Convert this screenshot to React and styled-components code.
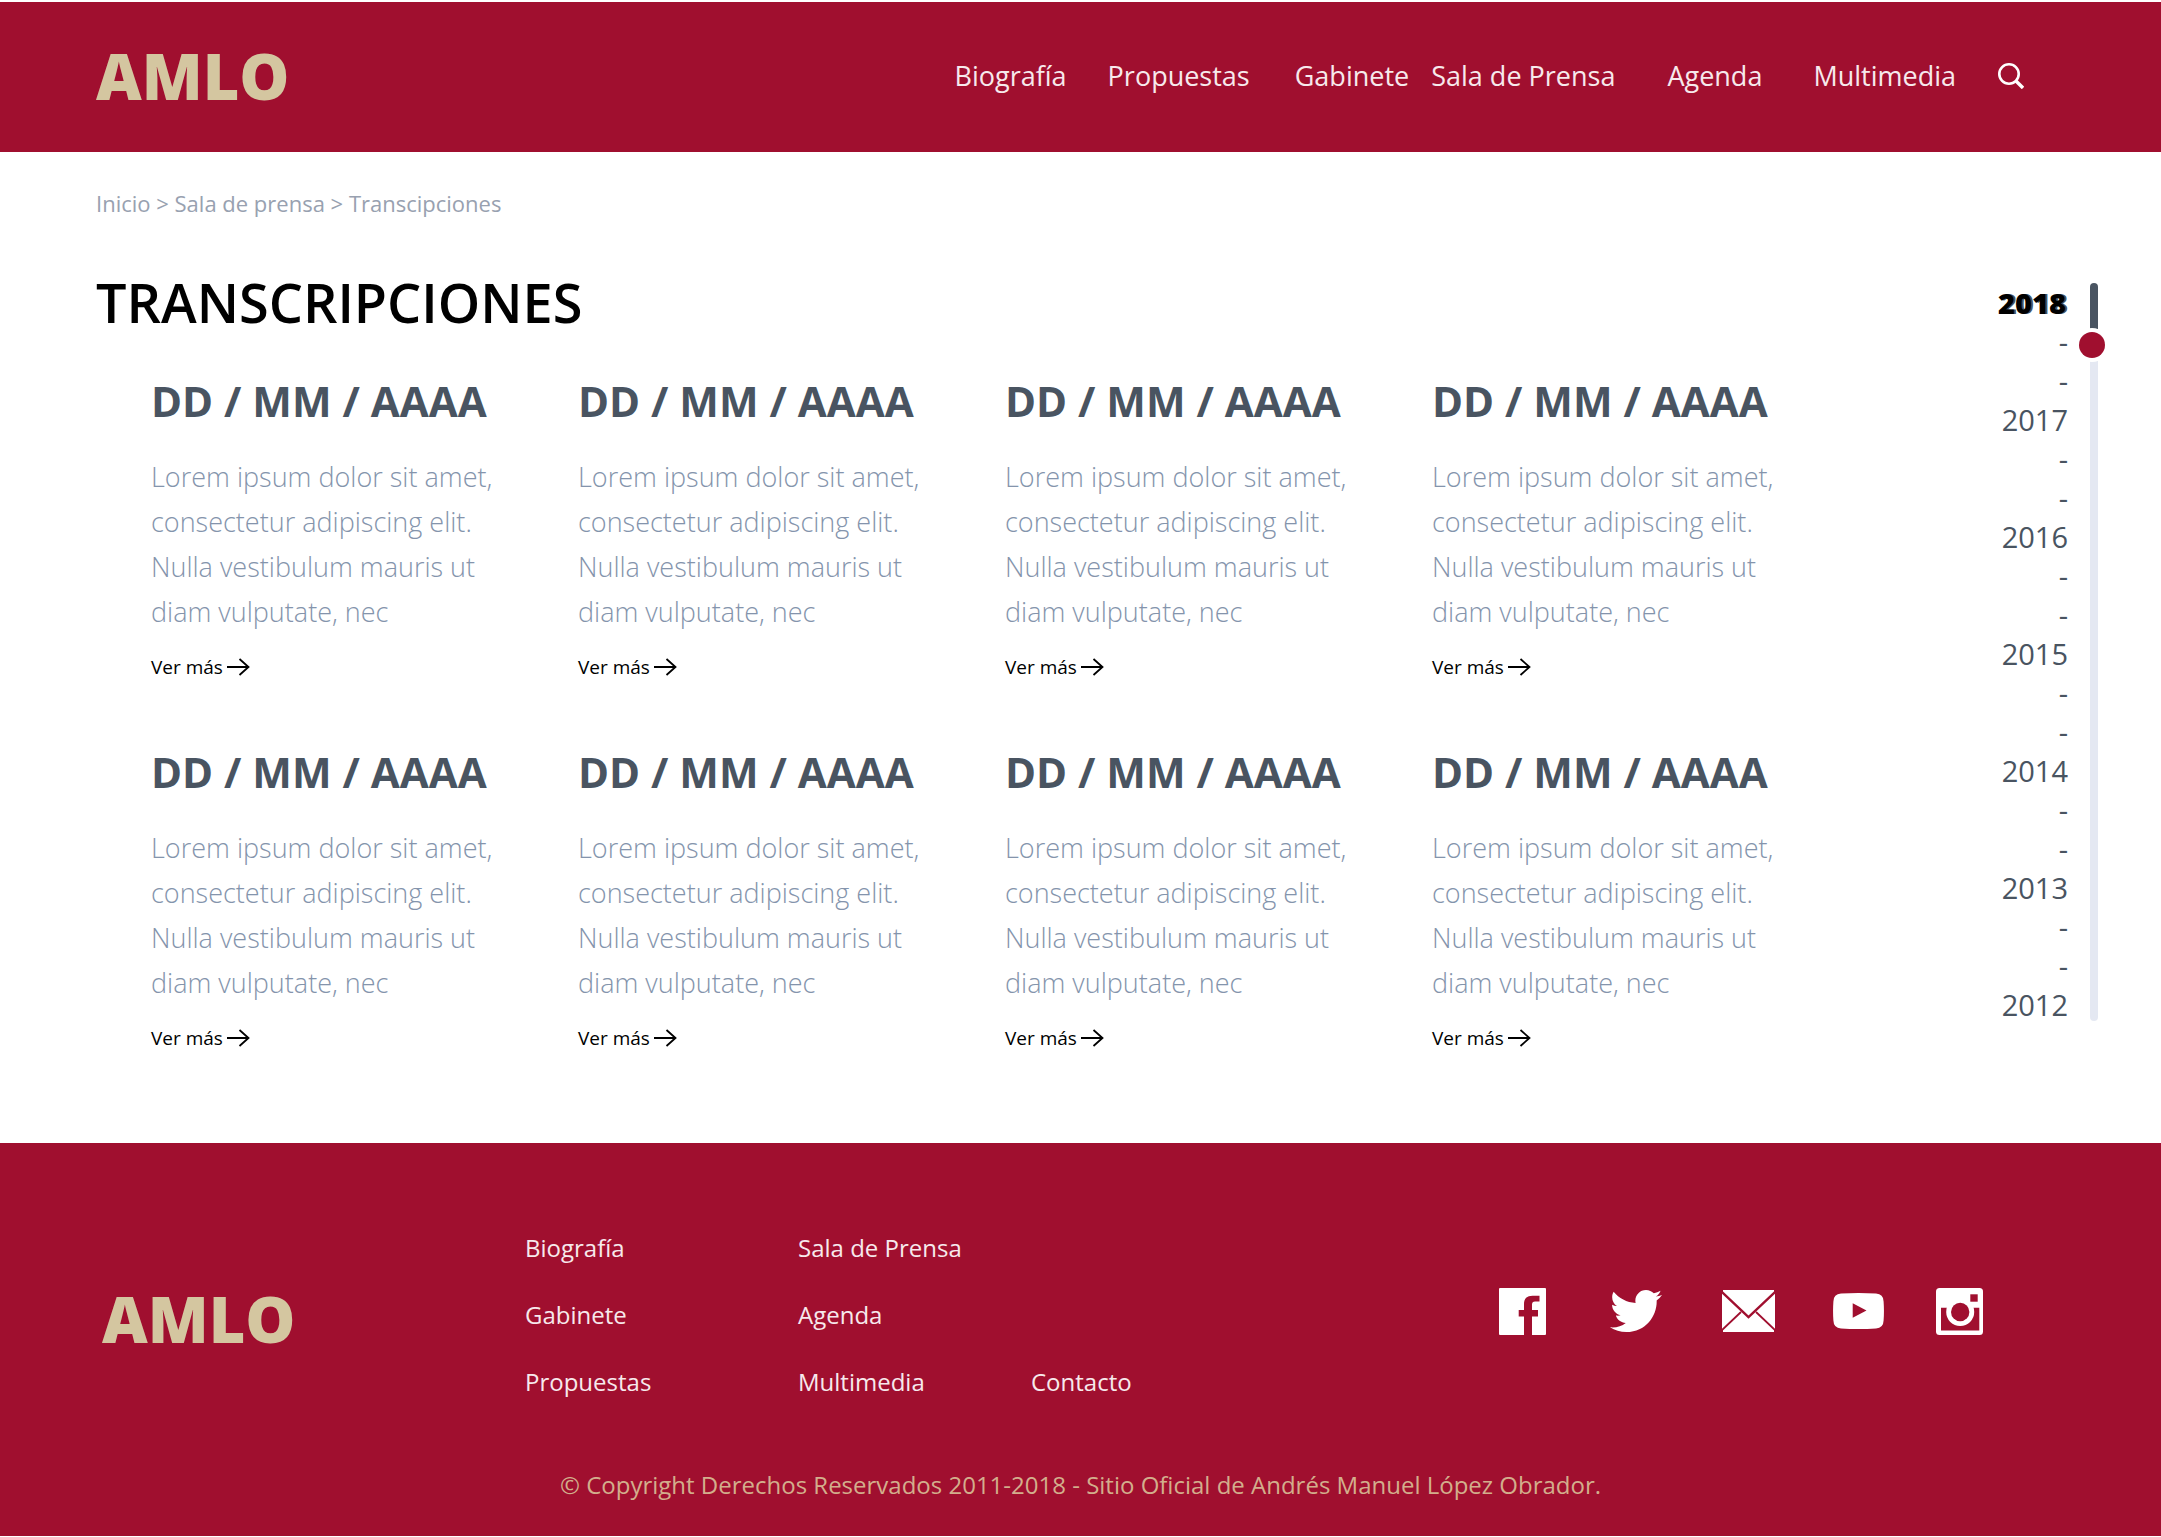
import React, { useState } from "react";
import styled, { createGlobalStyle, css } from "styled-components";
import { FaTwitter } from "react-icons/fa";

const color = {
  wine: "#a00f2f",
  sand: "#d4c6a0",
  slate: "#495461",
  mist: "#8494ac",
  crumb: "#98a1b0",
  track: "#e4e8f2",
};

const GlobalStyle = createGlobalStyle`
  *, *::before, *::after { box-sizing: border-box; }
  body {
    margin: 0;
    background: #fff;
    color: #000;
    font-family: "Open Sans", "Noto Sans", sans-serif;
  }
  h1, h2, p, ul { margin: 0; padding: 0; }
  ul { list-style: none; }
  a { color: inherit; text-decoration: none; }
`;

const Page = styled.div`
  padding-top: 2px;
`;

const Header = styled.header`
  display: flex;
  align-items: center;
  justify-content: space-between;
  height: 150px;
  padding: 0 137px 2px 96px;
  background: ${color.wine};
`;

const Logo = styled.a`
  color: ${color.sand};
  font-size: 63px;
  font-weight: 800;
  line-height: 86px;
`;

const Nav = styled.nav`
  display: flex;
  align-items: center;
`;

const NavLink = styled.a`
  margin-right: ${({ $gap }) => $gap}px;
  color: #f7e9ec;
  font-size: 27px;
  line-height: 36px;
  white-space: nowrap;
`;

const SearchButton = styled.button`
  display: flex;
  padding: 0;
  border: 0;
  background: none;
  color: #fff;
  cursor: pointer;
`;

const Main = styled.main`
  display: flex;
  align-items: flex-start;
  gap: 195px;
  padding: 36px 52px 92px 96px;
`;

const Content = styled.div`
  flex: 1;
  min-width: 0;
`;

const Breadcrumb = styled.nav`
  color: ${color.crumb};
  font-size: 22px;
  line-height: 30px;
`;

const Title = styled.h1`
  margin-top: 48px;
  font-size: 54px;
  font-weight: 600;
  line-height: 72px;
`;

const CardGrid = styled.section`
  display: grid;
  grid-template-columns: repeat(4, 1fr);
  gap: 64px 56px;
  margin-top: 35px;
  padding-left: 55px;
`;

const Card = styled.article`
  display: flex;
  flex-direction: column;
  align-items: flex-start;
`;

const CardDate = styled.h2`
  color: ${color.slate};
  font-size: 42px;
  font-weight: 700;
  line-height: 56px;
`;

const CardText = styled.p`
  margin-top: 25px;
  color: ${color.mist};
  font-size: 27px;
  font-weight: 300;
  line-height: 45px;
`;

const MoreLink = styled.a`
  display: flex;
  align-items: center;
  gap: 4px;
  margin-top: 20px;
  font-size: 19px;
  line-height: 26px;
`;

const Timeline = styled.aside`
  display: flex;
  gap: 11px;
  margin-top: 95px;
`;

const Ticks = styled.ul`
  width: 70px;
  color: ${color.slate};
  font-size: 29px;
  line-height: 39px;
  text-align: right;
`;

const YearLink = styled.a`
  ${({ $current }) =>
    $current &&
    css`
      padding-right: 2px;
      color: #000;
      font-weight: 800;
      text-shadow: 2px 0 ${color.slate};
    `}
`;

const MonthSlider = styled.input`
  appearance: none;
  writing-mode: vertical-lr;
  width: 30px;
  height: 738px;
  margin: 0;
  background: none;
  cursor: pointer;

  &::-webkit-slider-runnable-track {
    width: 8px;
    height: 100%;
    border-radius: 4px;
    background: linear-gradient(
      ${color.slate} var(--filled),
      ${color.track} var(--filled)
    );
  }

  &::-webkit-slider-thumb {
    appearance: none;
    width: 26px;
    height: 26px;
    margin-left: -11px;
    border-radius: 50%;
    background: ${color.wine};
    box-shadow: 0 0 0 4px #fff;
  }
`;

const Footer = styled.footer`
  padding: 88px 0 34px;
  background: ${color.wine};
`;

const FooterRow = styled.div`
  display: flex;
  align-items: flex-start;
  padding: 0 178px 0 102px;
`;

const FooterBrand = styled.div`
  width: 423px;
  padding-top: 45px;
`;

const FooterLinks = styled.nav`
  display: grid;
  grid-template-columns: 273px 233px auto;
  grid-template-rows: repeat(3, 34px);
  grid-auto-flow: column;
  row-gap: 33px;
`;

const FooterLink = styled.a`
  grid-row: ${({ $row }) => $row};
  color: #f7e9ec;
  font-size: 24px;
  line-height: 34px;
`;

const Social = styled.div`
  display: flex;
  align-items: center;
  margin: 54px 0 0 auto;
`;

const SocialLink = styled.a`
  display: flex;
  margin-left: ${({ $gap = 0 }) => $gap}px;
  color: #fff;
`;

const Copyright = styled.p`
  margin-top: 69px;
  color: #d3ae8c;
  font-size: 24px;
  line-height: 34px;
  text-align: center;
`;

const SearchIcon = () => (
  <svg width="26" height="26" viewBox="0 0 26 26" fill="none" stroke="currentColor" aria-hidden="true">
    <circle cx="11" cy="11" r="9.7" strokeWidth="2.6" />
    <path d="M17.5 17.5 25 25" strokeWidth="3.4" />
  </svg>
);

const ArrowIcon = () => (
  <svg width="23" height="18" viewBox="0 0 23 18" fill="none" stroke="currentColor" strokeWidth="1.8" aria-hidden="true">
    <path d="M0 9h21.5M12.5 1l9 8-9 8" />
  </svg>
);

const FacebookIcon = () => (
  <svg width="47" height="47" viewBox="0 0 47 47" fill="currentColor" aria-hidden="true">
    <path
      fillRule="evenodd"
      d="M1 0h45a1 1 0 0 1 1 1v45a1 1 0 0 1-1 1H33V28.5h6V22h-6v-5.500q0-3 3-3h4.500V7.700h-7C28 7.700 25 10.500 25 16v6h-5.300v6.500H25V47H1a1 1 0 0 1-1-1V1a1 1 0 0 1 1-1z"
    />
  </svg>
);

const MailIcon = () => (
  <svg width="53" height="42" viewBox="0 0 53 42" aria-hidden="true">
    <path d="M1 0h51v3h1v36h-1v3H1v-3H0V3h1z" fill="currentColor" />
    <path d="M0 2 26.500 27 53 2" fill="none" stroke={color.wine} strokeWidth="2.400" />
    <path d="M0 40 19 22M53 40 34 22" stroke={color.wine} strokeWidth="1.800" />
  </svg>
);

const YoutubeIcon = () => (
  <svg width="51" height="36" viewBox="0 0 51 36" fill="currentColor" aria-hidden="true">
    <path
      fillRule="evenodd"
      d="M8 .6Q25.500-.6 43 .6 50.400 1 50.600 8.500q.7 9.500 0 19-.2 7.500-7.600 7.900-17.500 1.200-35 0Q.6 35 .4 27.500q-.7-9.500 0-19Q.6 1 8 .6zM19.700 10.300v14.500L33.500 17.500z"
    />
  </svg>
);

const InstagramIcon = () => (
  <svg width="47" height="47" viewBox="0 0 47 47" aria-hidden="true">
    <rect width="47" height="47" rx="3.500" fill="currentColor" />
    <path d="M5 19.700h38.300V42.500H5z" fill={color.wine} />
    <circle cx="24.200" cy="24" r="14" fill="currentColor" />
    <circle cx="24.200" cy="24" r="9.200" fill={color.wine} />
    <path d="M34.300 6.300h7.400v7.400h-7.400z" fill={color.wine} />
  </svg>
);

const navItems = [
  { label: "Biografía", gap: 41 },
  { label: "Propuestas", gap: 45 },
  { label: "Gabinete", gap: 22 },
  { label: "Sala de Prensa", gap: 52 },
  { label: "Agenda", gap: 51 },
  { label: "Multimedia", gap: 42 },
];

const footerItems = [
  { label: "Biografía", row: 1 },
  { label: "Gabinete", row: 2 },
  { label: "Propuestas", row: 3 },
  { label: "Sala de Prensa", row: 1 },
  { label: "Agenda", row: 2 },
  { label: "Multimedia", row: 3 },
  { label: "Contacto", row: 3 },
];

const transcripts = Array.from({ length: 8 }, (_, id) => ({
  id,
  date: "DD / MM / AAAA",
  text: "Lorem ipsum dolor sit amet, consectetur adipiscing elit. Nulla vestibulum mauris ut diam vulputate, nec",
}));

const ticks = [2018, 2017, 2016, 2015, 2014, 2013, 2012].flatMap((year, i) =>
  i === 0 ? [year] : ["-", "-", year]
);

const MONTHS = 72;

export default function App() {
  const [month, setMonth] = useState(5);

  return (
    <Page>
      <GlobalStyle />
      <Header>
        <Logo href="#">AMLO</Logo>
        <Nav aria-label="Principal">
          {navItems.map(({ label, gap }) => (
            <NavLink key={label} href="#" $gap={gap}>
              {label}
            </NavLink>
          ))}
          <SearchButton type="button" aria-label="Buscar">
            <SearchIcon />
          </SearchButton>
        </Nav>
      </Header>

      <Main>
        <Content>
          <Breadcrumb aria-label="Ruta">
            <a href="#">Inicio</a> &gt; <a href="#">Sala de prensa</a> &gt; <a href="#">Transcipciones</a>
          </Breadcrumb>
          <Title>TRANSCRIPCIONES</Title>
          <CardGrid>
            {transcripts.map(({ id, date, text }) => (
              <Card key={id}>
                <CardDate>{date}</CardDate>
                <CardText>{text}</CardText>
                <MoreLink href="#">
                  Ver más
                  <ArrowIcon />
                </MoreLink>
              </Card>
            ))}
          </CardGrid>
        </Content>

        <Timeline>
          <Ticks>
            {ticks.map((tick, i) => (
              <li key={i}>
                {tick === "-" ? (
                  tick
                ) : (
                  <YearLink href="#" $current={i === 0}>
                    {tick}
                  </YearLink>
                )}
              </li>
            ))}
          </Ticks>
          <MonthSlider
            type="range"
            aria-label="Fecha"
            min={0}
            max={MONTHS}
            value={month}
            onChange={(e) => setMonth(Number(e.target.value))}
            style={{ "--filled": `${(month / MONTHS) * 100}%` }}
          />
        </Timeline>
      </Main>

      <Footer>
        <FooterRow>
          <FooterBrand>
            <Logo href="#">AMLO</Logo>
          </FooterBrand>
          <FooterLinks aria-label="Pie de página">
            {footerItems.map(({ label, row }) => (
              <FooterLink key={label} href="#" $row={row}>
                {label}
              </FooterLink>
            ))}
          </FooterLinks>
          <Social>
            <SocialLink href="#" aria-label="Facebook">
              <FacebookIcon />
            </SocialLink>
            <SocialLink href="#" aria-label="Twitter" $gap={64}>
              <FaTwitter size={52} />
            </SocialLink>
            <SocialLink href="#" aria-label="Correo" $gap={60}>
              <MailIcon />
            </SocialLink>
            <SocialLink href="#" aria-label="YouTube" $gap={58}>
              <YoutubeIcon />
            </SocialLink>
            <SocialLink href="#" aria-label="Instagram" $gap={52}>
              <InstagramIcon />
            </SocialLink>
          </Social>
        </FooterRow>
        <Copyright>
          © Copyright Derechos Reservados 2011-2018 - Sitio Oficial de Andrés Manuel López Obrador.
        </Copyright>
      </Footer>
    </Page>
  );
}
